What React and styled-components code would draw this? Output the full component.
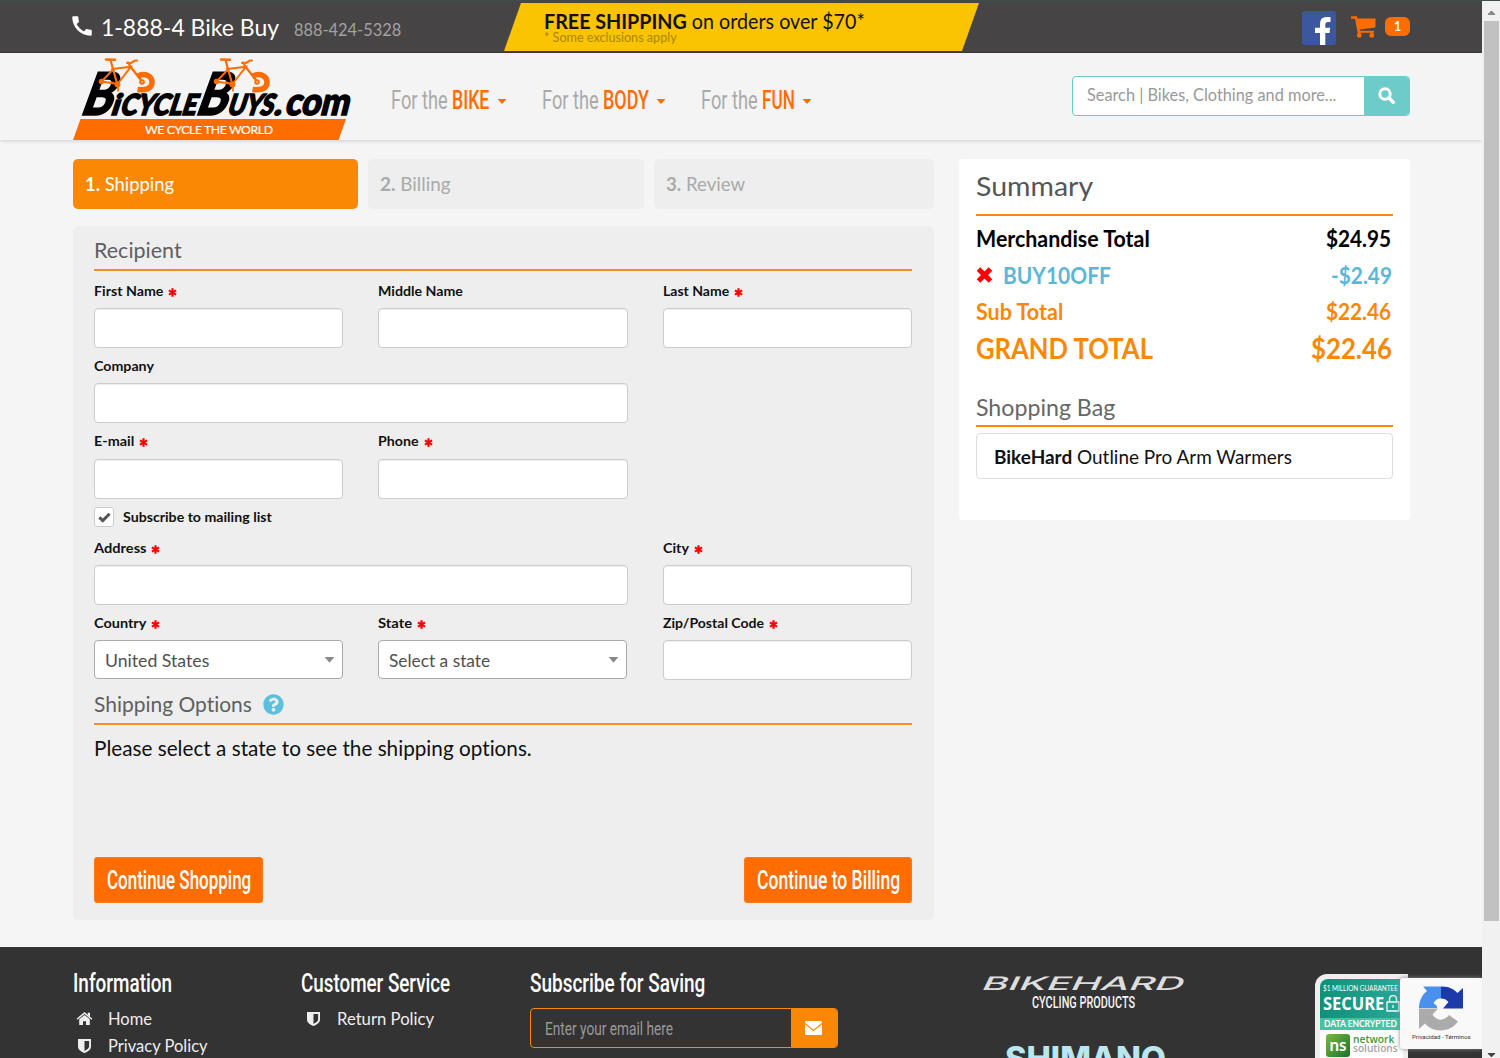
import React, { useLayoutEffect, useRef, useState } from 'react';
import styled, { createGlobalStyle } from 'styled-components';
import { FaQuestionCircle, FaCaretUp, FaCaretDown } from 'react-icons/fa';
import { MdCall } from 'react-icons/md';

const GlobalStyle = createGlobalStyle`
  * { box-sizing: border-box; }
  html, body { margin: 0; padding: 0; overflow: hidden; }
  body { font-family: Lato, sans-serif; font-variant-ligatures: none; color: #111; background: #f5f5f5; }
  svg { display: block; }
`;

const ORANGE = '#ff6c00';
const AMBER = '#fb8804';

// squeezes (or stretches) its text to a fixed width
const Fit = ({ width, children }) => {
    const ref = useRef(null);
    const [scale, setScale] = useState(1);

    useLayoutEffect(() => {
        setScale(width / ref.current.offsetWidth);
    }, [width]);

    return (
        <FitBox $w={width}>
            <FitText ref={ref} style={{ transform: `scaleX(${scale})` }}>{children}</FitText>
        </FitBox>
    );
};

// Icons

const Required = () => (
    <Star>
        <svg width="9" height="9" viewBox="0 0 9 9" stroke="#f00" strokeWidth="2.200">
            <path d="M4.500 .3v8.400M.9 2.400l7.200 4.200M8.100 2.400L.9 6.600" />
        </svg>
    </Star>
);

const CartIcon = () => (
    <svg width="25" height="22" viewBox="0 0 25 22" fill={ORANGE}>
        <path d="M.8 1.500H5L8 17" fill="none" stroke={ORANGE} strokeWidth="2.400" strokeLinecap="round" />
        <path d="M5 2.500H24.500V11.500L7.500 13.800Z" />
        <path d="M7 15.800H23" stroke={ORANGE} strokeWidth="2" />
        <rect x="6" y="17" width="4.500" height="4.500" rx="1.500" />
        <rect x="18.500" y="17" width="4.500" height="4.500" rx="1.500" />
    </svg>
);

const SearchIcon = () => (
    <svg width="17" height="17" viewBox="0 0 17 17" fill="none" stroke="#fff">
        <circle cx="7" cy="7" r="5.200" strokeWidth="3" />
        <path d="M11 11l4.300 4.300" strokeWidth="3.400" strokeLinecap="round" />
    </svg>
);

const CheckIcon = () => (
    <svg width="13" height="11" viewBox="0 0 13 11">
        <path d="M1.300 5.300L4.800 8.600L11.600 1.800" fill="none" stroke="#555" strokeWidth="3" />
    </svg>
);

const HomeIcon = () => (
    <svg width="16" height="13" viewBox="0 0 16 13" fill="#eee">
        <path d="M.6 7.200L8 1l7.400 6.200" fill="none" stroke="#eee" strokeWidth="1.500" />
        <path d="M11.300 .8h2.200v4l-2.200-1.800z" />
        <path d="M2.700 7.300L8 2.900l5.300 4.400V13H9.500V9.200h-3V13H2.700z" />
    </svg>
);

const ShieldIcon = () => (
    <svg width="13" height="14" viewBox="0 0 13 14">
        <path fillRule="evenodd" fill="#eee" d="M0 0h13v7.500c0 3-2.500 5-6.500 6.500C2.500 12.500 0 10.500 0 7.500zM6.500 2v9.900c3-1.400 4.600-2.700 4.600-4.600V2z" />
    </svg>
);

const Field = ({ label, required, span, children }) => (
    <FieldBox $span={span}>
        <Label><Fit width={label[1]}>{label[0]}</Fit>{required && <Required />}</Label>
        {children || <Input />}
    </FieldBox>
);

const Bike = ({ x }) => (
    <g transform={`translate(${x} 0)`} fill="none" stroke={ORANGE} strokeLinecap="round">
        <path d="M33 1.500L42 1.800" strokeWidth="2.600" />
        <path d="M37.500 2L44.500 27M55 4.500L58.500 10L69.500 24M54 5L58 5L62 2.500H64" strokeWidth="2.200" />
        <path d="M39 11L58 8.700L44.500 26M39.500 12L28.500 23.500L44.500 26" strokeWidth="1.900" />
        <circle cx="28.500" cy="23.500" r="2" fill={ORANGE} strokeWidth="1.500" />
        <circle cx="44.500" cy="26.500" r="2.200" fill={ORANGE} strokeWidth="1.500" />
        <path d="M45 28v5M43 26l-5-2" strokeWidth="1.600" />
        <path d="M64 18.500C72 14 79.500 18 79 25C78.500 31 72 32.500 64.500 31.500" strokeWidth="5.500" strokeLinecap="butt" />
        <circle cx="69" cy="24" r="1.800" fill="#f4f4f4" strokeWidth="2" />
    </g>
);

const Logo = () => (
    <LogoSvg width="280" height="83" viewBox="0 0 280 83">
        <g fontFamily="Lato" fontWeight="900" fill="#000" stroke="#000" strokeWidth="1.600">
            <text transform="translate(6 57.200) skewX(-20)" fontSize="59" textLength="31" lengthAdjust="spacingAndGlyphs">B</text>
            <text transform="translate(37 57.200) skewX(-18)" fontSize="29" textLength="8" lengthAdjust="spacingAndGlyphs">i</text>
            <text transform="translate(46 57.200) skewX(-18)" fontSize="29" textLength="76" lengthAdjust="spacingAndGlyphs">CYCLE</text>
            <text transform="translate(121 57.200) skewX(-20)" fontSize="59" textLength="31" lengthAdjust="spacingAndGlyphs">B</text>
            <text transform="translate(153 57.200) skewX(-18)" fontSize="29" textLength="46" lengthAdjust="spacingAndGlyphs">UYS</text>
            <text transform="translate(200 57.200) skewX(-18)" fontSize="32" textLength="8" lengthAdjust="spacingAndGlyphs">.</text>
            <text transform="translate(211 57.200) skewX(-14)" fontSize="38" textLength="64" lengthAdjust="spacingAndGlyphs">com</text>
        </g>
        <Bike x={0} />
        <Bike x={115} />
        <path d="M7.500 61H273L265.500 82H0Z" fill={ORANGE} />
        <text x="72" y="75.800" fontFamily="Lato" fontSize="12.300" fill="#fff" stroke="#fff" strokeWidth=".2" textLength="128">WE CYCLE THE WORLD</text>
    </LogoSvg>
);

const Recaptcha = () => (
    <svg width="46" height="46" viewBox="0 0 46 46">
        <path d="M1 23C1 15 5 9 9 6L5 1.500H23V13.500C19 13 17 16 15.500 18L19 21V23Z" fill="#4a90ee" />
        <path d="M23 1.500C30 1 36 4 39.500 8L45 3V23.500H25L30.500 17C28.500 14.500 26 13.500 23 13.500Z" fill="#1c3aa9" />
        <path d="M1 23.500H20L14.500 29.500C19 36.500 26 36 31 30L40 36.500C32 48 15 48 7 38.500L1 44Z" fill="#ababab" />
    </svg>
);

const navItems = [
    { name: 'BIKE', w: 37.5 },
    { name: 'BODY', w: 46 },
    { name: 'FUN', w: 33 }
];

const App = () => {
    return (
        <>
        <GlobalStyle />
        <Screen>
            <Page>
                <TopBar>
                    <Phone>
                        <MdCall size={26} />
                        <PhoneName><Fit width={178}>1-888-4 Bike Buy</Fit></PhoneName>
                        <PhoneNumber><Fit width={107}>888-424-5328</Fit></PhoneNumber>
                    </Phone>
                    <Promo>
                        <PromoTitle><Fit width={321}><b>FREE SHIPPING</b> on orders over $70*</Fit></PromoTitle>
                        <PromoNote><Fit width={133}>* Some exclusions apply</Fit></PromoNote>
                    </Promo>
                    <TopIcons>
                        <svg width="34" height="34" viewBox="0 0 34 34">
                            <rect width="34" height="34" rx="2.500" fill="#3b579d" />
                            <path d="M18 34V22H13V16.800H18V13Q18 6 24.500 6H28.500V11H26Q23.300 11 23.300 13.500V16.800H28.200L27.500 22H23.300V34Z" fill="#fff" />
                        </svg>
                        <CartIcon />
                        <Badge>1</Badge>
                    </TopIcons>
                </TopBar>

                <NavBar>
                    <Logo />
                    <Nav>
                        {navItems.map((item) => (
                            <NavItem key={item.name}>
                                <Fit width={57}>For the</Fit>
                                <NavName><Fit width={item.w}>{item.name}</Fit></NavName>
                                <Caret />
                            </NavItem>
                        ))}
                    </Nav>
                    <Search>
                        <SearchText><Fit width={249}>Search | Bikes, Clothing and more...</Fit></SearchText>
                        <SearchButton><SearchIcon /></SearchButton>
                    </Search>
                </NavBar>

                <Main>
                    <Left>
                        <Steps>
                            <Step $active><Fit width={89}><b>1.</b> Shipping</Fit></Step>
                            <Step><Fit width={70.5}><b>2.</b> Billing</Fit></Step>
                            <Step><Fit width={79.5}><b>3.</b> Review</Fit></Step>
                        </Steps>
                        <Panel>
                            <Heading><Fit width={88}>Recipient</Fit></Heading>
                            <Grid>
                                <Field label={['First Name', 69.5]} required />
                                <Field label={['Middle Name', 85]} />
                                <Field label={['Last Name', 66.5]} required />
                                <Field label={['Company', 60]} span={2} />
                                <Blank />
                                <Field label={['E-mail', 40.5]} required />
                                <Field label={['Phone', 41]} required />
                            </Grid>
                            <CheckRow>
                                <CheckBox><CheckIcon /></CheckBox>
                                <Fit width={149}>Subscribe to mailing list</Fit>
                            </CheckRow>
                            <Grid>
                                <Field label={['Address', 52]} required span={2} />
                                <Field label={['City', 26.5]} required />
                                <Field label={['Country', 52.5]} required>
                                    <Select><Fit width={104}>United States</Fit><Arrow /></Select>
                                </Field>
                                <Field label={['State', 34]} required>
                                    <Select><Fit width={101}>Select a state</Fit><Arrow /></Select>
                                </Field>
                                <Field label={['Zip/Postal Code', 101]} required />
                            </Grid>
                            <Heading $second>
                                <Fit width={158}>Shipping Options</Fit>
                                <FaQuestionCircle size={21} color="#5bc0de" />
                            </Heading>
                            <Message><Fit width={438}>Please select a state to see the shipping options.</Fit></Message>
                            <Buttons>
                                <Button $w={169}><Fit width={144}>Continue Shopping</Fit></Button>
                                <Button $w={168}><Fit width={143}>Continue to Billing</Fit></Button>
                            </Buttons>
                        </Panel>
                    </Left>

                    <Summary>
                        <SummaryTitle><Fit width={117}>Summary</Fit></SummaryTitle>
                        <Total><Fit width={174}>Merchandise Total</Fit><Fit width={65.5}>$24.95</Fit></Total>
                        <Total $color="#5bb7d8">
                            <Coupon>
                                <svg width="17" height="16" viewBox="0 0 17 16">
                                    <path d="M2.500 2L14.500 14M14.500 2L2.500 14" stroke="#f00" strokeWidth="5" />
                                </svg>
                                <Fit width={108}>BUY10OFF</Fit>
                            </Coupon>
                            <Fit width={61}>-$2.49</Fit>
                        </Total>
                        <Total $color={AMBER}><Fit width={87}>Sub Total</Fit><Fit width={65.5}>$22.46</Fit></Total>
                        <Total $color={AMBER} $big><Fit width={177}>GRAND TOTAL</Fit><Fit width={80.5}>$22.46</Fit></Total>
                        <BagTitle><Fit width={139}>Shopping Bag</Fit></BagTitle>
                        <BagItem><Fit width={298}><b>BikeHard</b> Outline Pro Arm Warmers</Fit></BagItem>
                    </Summary>
                </Main>

                <Footer>
                    <FooterCol $w={228.5}>
                        <FooterTitle><Fit width={99}>Information</Fit></FooterTitle>
                        <FooterLink><HomeIcon /><Fit width={44}>Home</Fit></FooterLink>
                        <FooterLink><ShieldIcon /><Fit width={100}>Privacy Policy</Fit></FooterLink>
                    </FooterCol>
                    <FooterCol $w={228.5}>
                        <FooterTitle><Fit width={149}>Customer Service</Fit></FooterTitle>
                        <FooterLink><ShieldIcon /><Fit width={97}>Return Policy</Fit></FooterLink>
                    </FooterCol>
                    <FooterCol $w={308}>
                        <FooterTitle><Fit width={175}>Subscribe for Saving</Fit></FooterTitle>
                        <MailBox>
                            <MailText><Fit width={128}>Enter your email here</Fit></MailText>
                            <MailButton>
                                <svg width="17" height="14" viewBox="0 0 17 14">
                                    <rect width="17" height="14" rx="1" fill="#fff" />
                                    <path d="M0 2.500L8.500 9.500L17 2.500" fill="none" stroke={AMBER} strokeWidth="1.200" />
                                </svg>
                            </MailButton>
                        </MailBox>
                    </FooterCol>
                    <Brands>
                        <svg width="210" height="82" viewBox="0 0 210 82">
                            <text transform="translate(-2 13.500) skewX(-26)" fontFamily="Inter" fontSize="18.500" fontWeight="500" fill="#ddd" textLength="202" lengthAdjust="spacingAndGlyphs">BIKEHARD</text>
                            <text x="50" y="32" fontFamily="Roboto" fontSize="17" fontWeight="500" fill="#f4f4f4" textLength="103" lengthAdjust="spacingAndGlyphs">CYCLING PRODUCTS</text>
                            <text x="23" y="94" fontFamily="Inter" fontSize="32" fontWeight="800" fill="#b9e6f0" textLength="161" lengthAdjust="spacingAndGlyphs">SHIMANO</text>
                        </svg>
                    </Brands>
                    <Secure>
                        <SecureTop>
                            <Guarantee><Fit width={75}>$1 MILLION GUARANTEE</Fit></Guarantee>
                            <SecureName>
                                <Fit width={61}>SECURE</Fit>
                                <svg width="14" height="17" viewBox="0 0 14 17" fill="none" stroke="#e8fffa" strokeWidth="1.300">
                                    <path d="M1 7h12v9H1zM3.500 7V4a3.500 3.500 0 0 1 7 0v3M7 10v3" />
                                </svg>
                            </SecureName>
                        </SecureTop>
                        <Encrypted><Fit width={73}>DATA ENCRYPTED</Fit></Encrypted>
                        <Network>
                            <NetworkMark>ns</NetworkMark>
                            <NetworkName>
                                <NetworkLine $color="#419a2c"><Fit width={41}>network</Fit></NetworkLine>
                                <NetworkLine $color="#a4a4a4"><Fit width={45}>solutions</Fit></NetworkLine>
                            </NetworkName>
                        </Network>
                    </Secure>
                </Footer>
                <Captcha>
                    <Recaptcha />
                    <CaptchaText><Fit width={59}>Privacidad - Términos</Fit></CaptchaText>
                </Captcha>
            </Page>
            <ScrollBar>
                <FaCaretUp size={13} color="#888" />
                <Thumb />
                <FaCaretDown size={13} color="#444" />
            </ScrollBar>
        </Screen>
        </>
    );
};

export default App;

const FitBox = styled.span`
  display: inline-block;
  flex: none;
  width: ${(p) => p.$w}px;
  white-space: nowrap;
`;
const FitText = styled.span`
  display: inline-block;
  transform-origin: 0 50%;
`;
const Screen = styled.div`
  display: flex;
  width: 1500px;
  height: 1058px;
  overflow: hidden;
`;
const Page = styled.div`
  position: relative;
  display: flex;
  flex-direction: column;
  width: 1482px;
  height: 1058px;
  overflow: hidden;
`;
const TopBar = styled.header`
  display: flex;
  flex: none;
  height: 53px;
  padding: 0 72px 0 73px;
  background: #474445;
  border-top: 2px solid #404c4a;
  border-bottom: 1px solid #3c393a;
`;
const Phone = styled.div`
  display: flex;
  align-items: center;
  width: 431px;
  padding-bottom: 1px;
  color: #fff;
  & > svg { margin: 0 0 2px -4px; }
`;
const PhoneName = styled.div`
  margin-left: 6px;
  font-size: 23.5px;
`;
const PhoneNumber = styled.div`
  margin: 5px 0 0 14.5px;
  font-size: 17px;
  color: #a3a1a1;
`;
const Promo = styled.div`
  width: 475px;
  height: 48px;
  margin-top: 1px;
  padding: 6px 0 0 40px;
  background: #fac402;
  clip-path: polygon(17px 0, 100% 0, 458px 100%, 0 100%);
`;
const PromoTitle = styled.div`
  font-size: 20.5px;
  line-height: 24px;
`;
const PromoNote = styled.div`
  margin-top: -3px;
  font-size: 13px;
  line-height: 15px;
  color: #a98700;
`;
const TopIcons = styled.div`
  display: flex;
  align-items: center;
  margin-left: auto;
  padding-top: 2px;
  & > svg:nth-child(2) { margin: -3px 0 0 15px; }
`;
const Badge = styled.span`
  width: 25px;
  height: 19px;
  margin: -3px 0 0 9px;
  border-radius: 6px;
  background: ${ORANGE};
  color: #fff;
  font-size: 13px;
  font-weight: 700;
  line-height: 19px;
  text-align: center;
`;
const NavBar = styled.nav`
  display: flex;
  flex: none;
  height: 87px;
  padding: 0 72px 0 73px;
  background: #f4f4f4;
  box-shadow: 0 1px 4px rgba(0, 0, 0, 0.16);
`;
const LogoSvg = styled.svg`
  flex: none;
  margin-top: 5px;
`;
const Nav = styled.div`
  display: flex;
  gap: 35px;
  margin: 32px 0 0 38px;
`;
const NavItem = styled.div`
  display: flex;
  height: 32px;
  font-family: Roboto, sans-serif;
  font-size: 25px;
  line-height: 32px;
  color: #aaa;
`;
const NavName = styled.span`
  margin-left: 4px;
  color: ${ORANGE};
  font-weight: 500;
`;
const Caret = styled.span`
  width: 9px;
  height: 5px;
  margin: 14px 0 0 8px;
  background: ${ORANGE};
  clip-path: polygon(0 0, 100% 0, 50% 100%);
`;
const Search = styled.div`
  display: flex;
  width: 338px;
  height: 40px;
  margin: 22.5px 0 0 auto;
  border: 1px solid #6dcbc9;
  border-radius: 4px;
  background: #fff;
  overflow: hidden;
`;
const SearchText = styled.div`
  flex: 1;
  padding-left: 14px;
  font-size: 16.5px;
  line-height: 37px;
  color: #999;
`;
const SearchButton = styled.div`
  display: flex;
  align-items: center;
  justify-content: center;
  width: 45px;
  background: #6dcbc9;
`;
const Main = styled.main`
  display: flex;
  flex: none;
  justify-content: space-between;
  align-items: flex-start;
  height: 807px;
  padding: 19px 72px 0 73px;
`;
const Left = styled.div`
  width: 861px;
`;
const Steps = styled.div`
  display: grid;
  grid-template-columns: 285px 276px 280px;
  gap: 10px;
`;
const Step = styled.div`
  height: 50px;
  padding-left: 11.5px;
  border-radius: 5px;
  background: ${(p) => (p.$active ? AMBER : '#eee')};
  color: ${(p) => (p.$active ? '#fff' : '#aaa')};
  font-size: 19px;
  line-height: 50px;
`;
const Panel = styled.section`
  height: 694px;
  margin-top: 17px;
  padding: 10px 22px 0 21px;
  border-radius: 5px;
  background: #eee;
`;
const Heading = styled.h2`
  display: flex;
  align-items: center;
  gap: 11px;
  height: 35px;
  margin: ${(p) => (p.$second ? '11.6px' : 0)} 0 0;
  padding-bottom: 4.5px;
  border-bottom: 2px solid #f0901f;
  color: #606060;
  font-size: 21.5px;
  font-weight: 400;
`;
const Grid = styled.div`
  display: grid;
  grid-template-columns: 249px 250px 249px;
  column-gap: 35px;
`;
const FieldBox = styled.div`
  grid-column: span ${(p) => p.$span || 1};
  height: 75.3px;
`;
const Blank = styled.div``;
const Label = styled.label`
  display: flex;
  align-items: center;
  height: 37px;
  padding-top: 2.600px;
  font-size: 13.5px;
  font-weight: 700;
`;
const Star = styled.span`
  margin: 3px 0 0 4.5px;
`;
const Input = styled.input`
  display: block;
  width: 100%;
  height: 40px;
  border: 1px solid #ccc;
  border-radius: 4px;
  background: #fff;
  box-shadow: inset 0 1px 1px rgba(0, 0, 0, 0.07);
`;
const Select = styled.div`
  display: flex;
  align-items: center;
  justify-content: space-between;
  width: 249px;
  height: 39px;
  padding: 0 7.5px 0 10px;
  border: 1px solid #aaa;
  border-radius: 4px;
  background: #fff;
  color: #505050;
  font-size: 18px;
`;
const Arrow = styled.span`
  width: 10px;
  height: 6px;
  background: #888;
  clip-path: polygon(0 0, 100% 0, 50% 100%);
`;
const CheckRow = styled.div`
  display: flex;
  align-items: center;
  height: 31px;
  padding-top: 10px;
  font-size: 13.5px;
  font-weight: 700;
`;
const CheckBox = styled.span`
  display: flex;
  align-items: center;
  justify-content: center;
  width: 20px;
  height: 20px;
  margin-right: 9px;
  border: 1px solid #ccc;
  border-radius: 3px;
  background: #fff;
`;
const Message = styled.p`
  margin: 0;
  padding-top: 9.5px;
  font-size: 21px;
  line-height: 26px;
`;
const Buttons = styled.div`
  display: flex;
  justify-content: space-between;
  margin-top: 96.500px;
`;
const Button = styled.button`
  width: ${(p) => p.$w}px;
  height: 46px;
  padding: 0;
  border: 1px solid #fb7a1c;
  border-radius: 3px;
  background: ${ORANGE};
  color: #fff;
  font-family: Roboto, sans-serif;
  font-size: 25px;
  font-weight: 500;
  line-height: 45px;
`;
const Summary = styled.aside`
  width: 451px;
  height: 361px;
  padding: 0 17.5px 0 17px;
  border-radius: 4px;
  background: #fff;
`;
const SummaryTitle = styled.h2`
  height: 57px;
  margin: 0 0 4.5px;
  border-bottom: 2px solid #f68a0c;
  color: #555;
  font-size: 27.5px;
  font-weight: 400;
  line-height: 54px;
`;
const Total = styled.div`
  display: flex;
  justify-content: space-between;
  align-items: center;
  height: 36.4px;
  padding-right: 1px;
  color: ${(p) => p.$color || '#000'};
  font-size: ${(p) => (p.$big ? 28.5 : 22.5)}px;
  font-weight: 700;
`;
const Coupon = styled.span`
  display: flex;
  align-items: center;
  gap: 10px;
`;
const BagTitle = styled.h3`
  height: 38px;
  margin: 22.900px 0 6px;
  border-bottom: 2px solid #f68a0c;
  color: #666;
  font-size: 23.5px;
  font-weight: 400;
  line-height: 36px;
`;
const BagItem = styled.div`
  height: 46px;
  padding-left: 17px;
  border: 1px solid #ddd;
  border-radius: 4px;
  font-size: 18.5px;
  line-height: 46px;
`;
const Footer = styled.footer`
  display: flex;
  flex: none;
  height: 111px;
  padding: 19px 72px 0 72.5px;
  background: #333;
  color: #eee;
  overflow: hidden;
`;
const FooterCol = styled.div`
  width: ${(p) => p.$w}px;
`;
const FooterTitle = styled.h4`
  height: 34px;
  margin: 0 0 5px;
  color: #fff;
  font-family: Roboto, sans-serif;
  font-size: 26px;
  font-weight: 500;
  line-height: 35px;
`;
const FooterLink = styled.div`
  display: flex;
  align-items: center;
  height: 27px;
  padding-left: 3.5px;
  font-size: 16.5px;
  & > svg { width: 17px; margin-right: 15px; }
`;
const MailBox = styled.div`
  display: flex;
  height: 40px;
  margin-top: 8px;
  border: 1px solid ${AMBER};
  border-radius: 4px;
  overflow: hidden;
`;
const MailText = styled.div`
  flex: 1;
  padding-left: 14px;
  margin-top: 3px;
  height: 35px;
  color: #999;
  font-family: Roboto, sans-serif;
  font-size: 17.5px;
  line-height: 35px;
`;
const MailButton = styled.div`
  display: flex;
  align-items: center;
  justify-content: center;
  width: 46px;
  background: ${AMBER};
`;
const Brands = styled.div`
  margin: 10px 0 0 144.5px;
  height: 82px;
`;
const Secure = styled.div`
  flex: none;
  width: 93px;
  height: 110px;
  margin: 8px 2px 0 auto;
  padding: 5px;
  border-radius: 12px 0 0 0;
  background: #eee;
  color: #fff;
`;
const SecureTop = styled.div`
  height: 39px;
  padding: 4px 0 0 3px;
  border-radius: 8px 0 0 0;
  background: linear-gradient(90deg, #0f9178, #2ca79a);
`;
const Guarantee = styled.div`
  font-size: 7px;
  line-height: 11px;
`;
const SecureName = styled.div`
  display: flex;
  align-items: center;
  gap: 2px;
  height: 18px;
  font-family: "Open Sans", sans-serif;
  font-size: 17px;
  font-weight: 700;
`;
const Encrypted = styled.div`
  height: 12px;
  padding-left: 4px;
  background: #45c3a3;
  font-size: 9.5px;
  font-weight: 700;
  line-height: 12px;
`;
const Network = styled.div`
  display: flex;
  height: 48px;
  padding: 4px 0 0 6px;
  background: #fff;
`;
const NetworkMark = styled.div`
  width: 24px;
  height: 23px;
  border-radius: 3px;
  background: linear-gradient(135deg, #7cbb3a, #17702f);
  font-size: 17px;
  font-weight: 700;
  line-height: 21px;
  text-align: center;
`;
const NetworkName = styled.div`
  margin-left: 3px;
`;
const NetworkLine = styled.div`
  height: 9px;
  color: ${(p) => p.$color};
  font-family: "Open Sans", sans-serif;
  font-size: 11px;
  font-weight: 600;
  line-height: 10px;
`;
/* floats over the corner of the page */
const Captcha = styled.div`
  position: absolute;
  right: 0;
  bottom: 9px;
  display: flex;
  flex-direction: column;
  align-items: center;
  width: 82px;
  height: 71px;
  padding: 7px 0 0;
  border-radius: 3px 0 0 3px;
  background: #f9f9f9;
  box-shadow: 0 0 4px #888;
`;
const CaptchaText = styled.div`
  margin-top: 2px;
  color: #333;
  font-family: Roboto, sans-serif;
  font-size: 6px;
  line-height: 8px;
`;
const ScrollBar = styled.div`
  display: flex;
  flex-direction: column;
  align-items: center;
  width: 18px;
  height: 1058px;
  padding: 5px 0 0;
  background: #f1f1f1;
  border-top: 1px solid #404c4a;
  & > svg:last-child { margin-top: auto; margin-bottom: -3px; }
`;
const Thumb = styled.div`
  width: 15px;
  height: 900px;
  margin-top: 2px;
  margin-left: 1px;
  background: #c1c1c1;
`;
